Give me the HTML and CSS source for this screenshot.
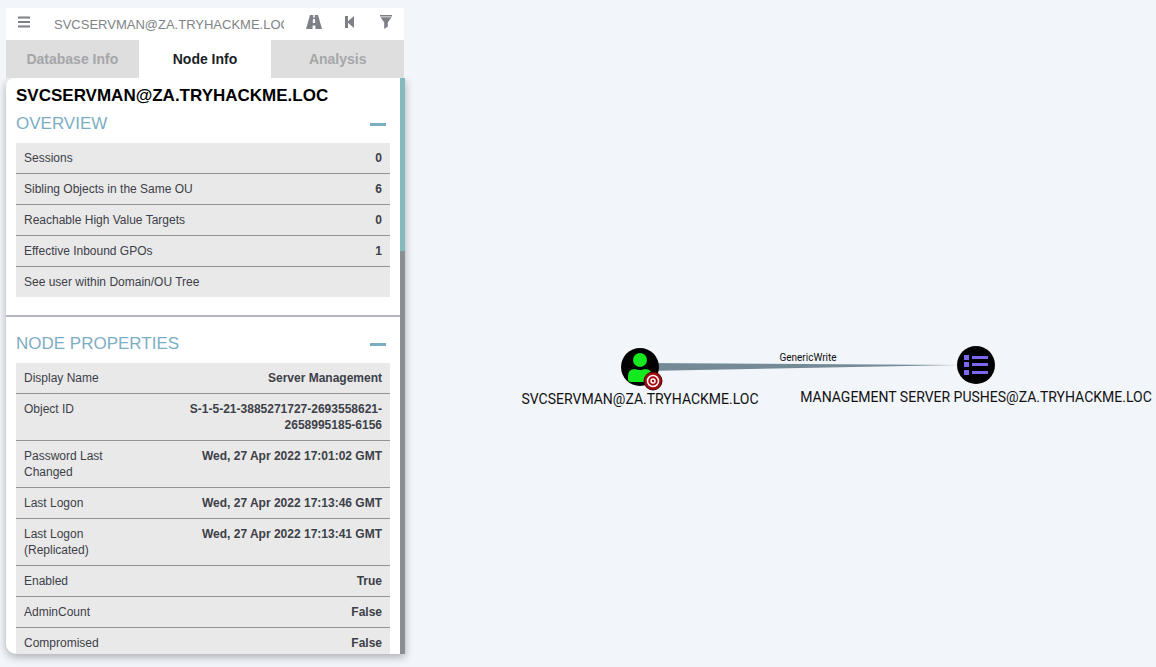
FILE: index.html
```html
<!DOCTYPE html>
<html lang="en">
<head>
<meta charset="utf-8">
<title>BloodHound</title>
<link rel="stylesheet" href="styles.css">
</head>
<body>
<aside class="panel">
  <form class="search">
    <button class="icon-btn" type="button" aria-label="Menu"><svg width="14" height="14" viewBox="0 0 14 14"><path d="M1 2.500h12M1 7h12M1 11.500h12" stroke="currentColor" stroke-width="2"/></svg></button>
    <input class="search-input" type="text" aria-label="Search for a node" value="SVCSERVMAN@ZA.TRYHACKME.LOC">
    <button class="icon-btn" type="button" aria-label="Pathfinding"><svg width="16" height="14" viewBox="0 0 16 14"><path fill="currentColor" fill-rule="evenodd" d="M4 0h3.300l-.2 2.500h1.800L8.700 0H12l4 14H9.500l-.2-3.500H6.700L6.500 14H0zM7 4l-.2 4h2.400L9 4z"/></svg></button>
    <button class="icon-btn" type="button" aria-label="Back"><svg width="16" height="14" viewBox="0 0 16 14"><path fill="currentColor" d="M3 1h3v5.200l6-5.200v12L6 7.800V13H3z"/></svg></button>
    <button class="icon-btn" type="button" aria-label="Filter"><svg width="14" height="14" viewBox="0 0 14 14"><path fill="currentColor" d="M1 0h12v1.500H1zM1.500 2.200h11L8.800 7.500v4L5.200 14V7.500z"/></svg></button>
  </form>
  <div class="tabs" role="tablist">
    <button class="tab" role="tab" type="button">Database Info</button>
    <button class="tab active" role="tab" type="button" aria-selected="true">Node Info</button>
    <button class="tab" role="tab" type="button">Analysis</button>
  </div>
  <div class="body">
    <div class="content">
      <h1 class="title">SVCSERVMAN@ZA.TRYHACKME.LOC</h1>
      <section class="section">
        <div class="section-head"><h2>OVERVIEW</h2><button class="collapse" type="button" aria-label="Collapse overview"></button></div>
        <table class="props">
          <tr><td>Sessions</td><td class="value">0</td></tr>
          <tr><td>Sibling Objects in the Same OU</td><td class="value">6</td></tr>
          <tr><td>Reachable High Value Targets</td><td class="value">0</td></tr>
          <tr><td>Effective Inbound GPOs</td><td class="value">1</td></tr>
          <tr><td colspan="2">See user within Domain/OU Tree</td></tr>
        </table>
      </section>
      <hr class="rule">
      <section class="section">
        <div class="section-head"><h2>NODE PROPERTIES</h2><button class="collapse" type="button" aria-label="Collapse node properties"></button></div>
        <table class="props">
          <tr><td class="name">Display Name</td><td class="value">Server Management</td></tr>
          <tr><td class="name">Object ID</td><td class="value">S-1-5-21-3885271727-2693558621-2658995185-6156</td></tr>
          <tr><td class="name">Password Last Changed</td><td class="value">Wed, 27 Apr 2022 17:01:02 GMT</td></tr>
          <tr><td class="name">Last Logon</td><td class="value">Wed, 27 Apr 2022 17:13:46 GMT</td></tr>
          <tr><td class="name">Last Logon (Replicated)</td><td class="value">Wed, 27 Apr 2022 17:13:41 GMT</td></tr>
          <tr><td class="name">Enabled</td><td class="value">True</td></tr>
          <tr><td class="name">AdminCount</td><td class="value">False</td></tr>
          <tr><td class="name">Compromised</td><td class="value">False</td></tr>
        </table>
      </section>
    </div>
    <div class="track"><div class="thumb"></div></div>
  </div>
</aside>
<main class="graph">
  <svg class="canvas" role="img" aria-label="Attack path graph">
    <path d="M240 363L553 365L240 371z" fill="#748a96"/>
    <text class="edge-label" x="403" y="361">GenericWrite</text>
    <g transform="translate(235 367)">
      <circle r="19"/>
      <circle cy="-7" r="7" fill="#14e81e"/>
      <path d="M-12 12V9Q-12 2-5 2Q0 4 5 2Q12 2 12 9V12Q12 15 9 15H-9Q-12 15-12 12z" fill="#14e81e"/>
      <g transform="translate(13 14)">
        <circle r="9" fill="#a80a10" stroke="#400" stroke-width="1"/>
        <circle r="5.500" fill="none" stroke="#fff" stroke-width="1.500"/>
        <circle r="2" fill="none" stroke="#fff" stroke-width="1.500"/>
      </g>
      <text class="node-label" y="37">SVCSERVMAN@ZA.TRYHACKME.LOC</text>
    </g>
    <g transform="translate(571 365)">
      <circle r="19"/>
      <path fill="#7b68ee" d="M-12-10h5v5h-5zM-12-3h5v5h-5zM-12 5h5v5h-5zM-4-9h16v3H-4zM-4-2h16v3H-4zM-4 6h16v3H-4z"/>
      <text class="node-label" y="37">MANAGEMENT SERVER PUSHES@ZA.TRYHACKME.LOC</text>
    </g>
  </svg>
</main>
</body>
</html>
```
FILE: styles.css
```css
* { box-sizing: border-box; }
body {
  margin: 0;
  height: 100vh;
  display: flex;
  overflow: hidden;
  background: #f2f5fa;
  font-family: "Liberation Sans", Arial, sans-serif;
}
button { border: 0; padding: 0; background: none; font: inherit; }
.panel {
  flex: 0 0 399px;
  margin: 8px 0 13px 6px;
  display: flex;
  flex-direction: column;
}
.search {
  display: flex;
  height: 32px;
  margin-right: 1px;
  background: #fff;
}
.icon-btn {
  flex: 0 0 36px;
  height: 28px;
  display: flex;
  align-items: center;
  justify-content: center;
  color: #7d8087;
}
.search-input {
  flex: 1;
  min-width: 0;
  margin: 0 12px;
  padding: 0;
  border: 0;
  background: none;
  color: #808388;
  font: 13px "Liberation Sans", Arial, sans-serif;
  outline: 0;
}
.tabs {
  display: flex;
  height: 38px;
  margin-right: 1px;
}
.tab {
  flex: 1;
  background: #dedede;
  color: #a5a6a8;
  font-size: 14px;
  font-weight: bold;
}
.tab.active { background: #fff; color: #1c1f28; }
.body {
  flex: 1;
  min-height: 0;
  display: flex;
  overflow: hidden;
  background: #fff;
  border-radius: 8px 0 0 10px;
  box-shadow: 0 3px 9px rgba(0, 0, 0, .3);
  clip-path: inset(0 -16px -16px -16px);
}
.content {
  flex: 1;
  min-width: 0;
  overflow: hidden;
  padding-top: 6px;
}
.track { flex: 0 0 5px; background: #8b8e94; }
.thumb { height: 30%; background: #85b9bc; }
.title {
  margin: 0 10px 2px;
  font-size: 17px;
  line-height: 24px;
  color: #000;
}
.section { margin: 0 10px; }
.section-head {
  display: flex;
  align-items: center;
  justify-content: space-between;
  height: 28px;
  margin-bottom: 5px;
  padding-right: 4px;
}
.section-head h2 {
  margin: 0;
  font-size: 17px;
  font-weight: normal;
  color: #7caec3;
}
.collapse { width: 16px; height: 3px; background: #7caec3; }
.props {
  width: 100%;
  border-spacing: 0;
  background: #e9e9e9;
  color: #3d4048;
  font-size: 12px;
  line-height: 16px;
}
.props td {
  padding: 7px 8px;
  border-bottom: 1px solid #919398;
  vertical-align: top;
}
.props tr:last-child td { border-bottom: 0; }
.props .name { width: 120px; }
.props .value { text-align: right; font-weight: bold; }
.rule {
  height: 2px;
  margin: 18px 0 13px;
  border: 0;
  background: #b5b7bc;
}
.graph { flex: 1; min-width: 0; }
.canvas { display: block; width: 100%; height: 100%; }
.canvas text { font-family: Roboto, sans-serif; text-anchor: middle; fill: #111; }
.canvas .node-label { font-size: 14px; }
.canvas .edge-label { font-size: 10px; }
```
